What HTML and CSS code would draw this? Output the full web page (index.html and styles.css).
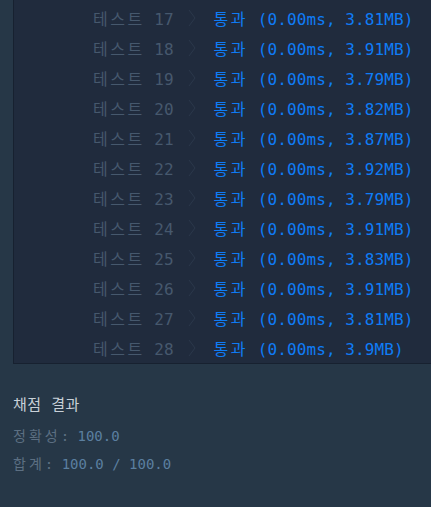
FILE: index.html
```html
<!DOCTYPE html>
<html lang="ko">
<head>
<meta charset="utf-8">
<link rel="stylesheet" href="styles.css">
</head>
<body>
<div class="page">
  <div class="panel">
    <div class="row"><span class="label"><span class="ko">테스트</span> 17</span><svg class="chev" viewBox="0 0 8 18" width="8" height="18"><path d="M1 1 L7 9 L1 17" fill="none" stroke="currentColor" stroke-width="1"/></svg><span class="pass"><span class="ko">통과</span> (0.00ms, 3.81MB)</span></div>
    <div class="row"><span class="label"><span class="ko">테스트</span> 18</span><svg class="chev" viewBox="0 0 8 18" width="8" height="18"><path d="M1 1 L7 9 L1 17" fill="none" stroke="currentColor" stroke-width="1"/></svg><span class="pass"><span class="ko">통과</span> (0.00ms, 3.91MB)</span></div>
    <div class="row"><span class="label"><span class="ko">테스트</span> 19</span><svg class="chev" viewBox="0 0 8 18" width="8" height="18"><path d="M1 1 L7 9 L1 17" fill="none" stroke="currentColor" stroke-width="1"/></svg><span class="pass"><span class="ko">통과</span> (0.00ms, 3.79MB)</span></div>
    <div class="row"><span class="label"><span class="ko">테스트</span> 20</span><svg class="chev" viewBox="0 0 8 18" width="8" height="18"><path d="M1 1 L7 9 L1 17" fill="none" stroke="currentColor" stroke-width="1"/></svg><span class="pass"><span class="ko">통과</span> (0.00ms, 3.82MB)</span></div>
    <div class="row"><span class="label"><span class="ko">테스트</span> 21</span><svg class="chev" viewBox="0 0 8 18" width="8" height="18"><path d="M1 1 L7 9 L1 17" fill="none" stroke="currentColor" stroke-width="1"/></svg><span class="pass"><span class="ko">통과</span> (0.00ms, 3.87MB)</span></div>
    <div class="row"><span class="label"><span class="ko">테스트</span> 22</span><svg class="chev" viewBox="0 0 8 18" width="8" height="18"><path d="M1 1 L7 9 L1 17" fill="none" stroke="currentColor" stroke-width="1"/></svg><span class="pass"><span class="ko">통과</span> (0.00ms, 3.92MB)</span></div>
    <div class="row"><span class="label"><span class="ko">테스트</span> 23</span><svg class="chev" viewBox="0 0 8 18" width="8" height="18"><path d="M1 1 L7 9 L1 17" fill="none" stroke="currentColor" stroke-width="1"/></svg><span class="pass"><span class="ko">통과</span> (0.00ms, 3.79MB)</span></div>
    <div class="row"><span class="label"><span class="ko">테스트</span> 24</span><svg class="chev" viewBox="0 0 8 18" width="8" height="18"><path d="M1 1 L7 9 L1 17" fill="none" stroke="currentColor" stroke-width="1"/></svg><span class="pass"><span class="ko">통과</span> (0.00ms, 3.91MB)</span></div>
    <div class="row"><span class="label"><span class="ko">테스트</span> 25</span><svg class="chev" viewBox="0 0 8 18" width="8" height="18"><path d="M1 1 L7 9 L1 17" fill="none" stroke="currentColor" stroke-width="1"/></svg><span class="pass"><span class="ko">통과</span> (0.00ms, 3.83MB)</span></div>
    <div class="row"><span class="label"><span class="ko">테스트</span> 26</span><svg class="chev" viewBox="0 0 8 18" width="8" height="18"><path d="M1 1 L7 9 L1 17" fill="none" stroke="currentColor" stroke-width="1"/></svg><span class="pass"><span class="ko">통과</span> (0.00ms, 3.91MB)</span></div>
    <div class="row"><span class="label"><span class="ko">테스트</span> 27</span><svg class="chev" viewBox="0 0 8 18" width="8" height="18"><path d="M1 1 L7 9 L1 17" fill="none" stroke="currentColor" stroke-width="1"/></svg><span class="pass"><span class="ko">통과</span> (0.00ms, 3.81MB)</span></div>
    <div class="row"><span class="label"><span class="ko">테스트</span> 28</span><svg class="chev" viewBox="0 0 8 18" width="8" height="18"><path d="M1 1 L7 9 L1 17" fill="none" stroke="currentColor" stroke-width="1"/></svg><span class="pass"><span class="ko">통과</span> (0.00ms, 3.9MB)</span></div>
  </div>
  <div class="result">
    <div class="title">채점 결과</div>
    <div class="line"><span class="ko">정확성</span>: <span class="num">100.0</span></div>
    <div class="line"><span class="ko">합계</span>: <span class="num">100.0 / 100.0</span></div>
  </div>
</div>
</body>
</html>
```
FILE: styles.css
```css
html, body {
  margin: 0;
  padding: 0;
  background: #263747;
  overflow: hidden;
}
body {
  font-family: "DejaVu Sans Mono", "Noto Sans CJK KR", monospace;
  font-size: 16px;
}
.page {
  width: 431px;
  height: 507px;
  padding-left: 13px;
  box-sizing: border-box;
}
.panel {
  background: #202b3d;
  border-left: 1px solid #172130;
  border-bottom: 1px solid #172130;
  margin-right: -20px;
  padding: 3px 0 0 79px;
}
.row {
  height: 30px;
  display: flex;
  align-items: center;
}
.ko {
  letter-spacing: 2.5px;
}
.label {
  color: #46586d;
  white-space: pre;
}
.chev {
  color: #2b384b;
  margin: 0 18px 0 14px;
}
.pass {
  color: #0f7cf6;
  white-space: pre;
  letter-spacing: 0.1px;
}
.result {
  padding-top: 28px;
  font-size: 14px;
}
.result .ko {
  letter-spacing: 3px;
}
.title {
  color: #c8d0d8;
  font-size: 15px;
  letter-spacing: 0.5px;
  line-height: 26px;
  margin-bottom: 4px;
}
.line {
  color: #5c6f82;
  line-height: 28px;
}
.num {
  color: #5b7fa0;
}
```
